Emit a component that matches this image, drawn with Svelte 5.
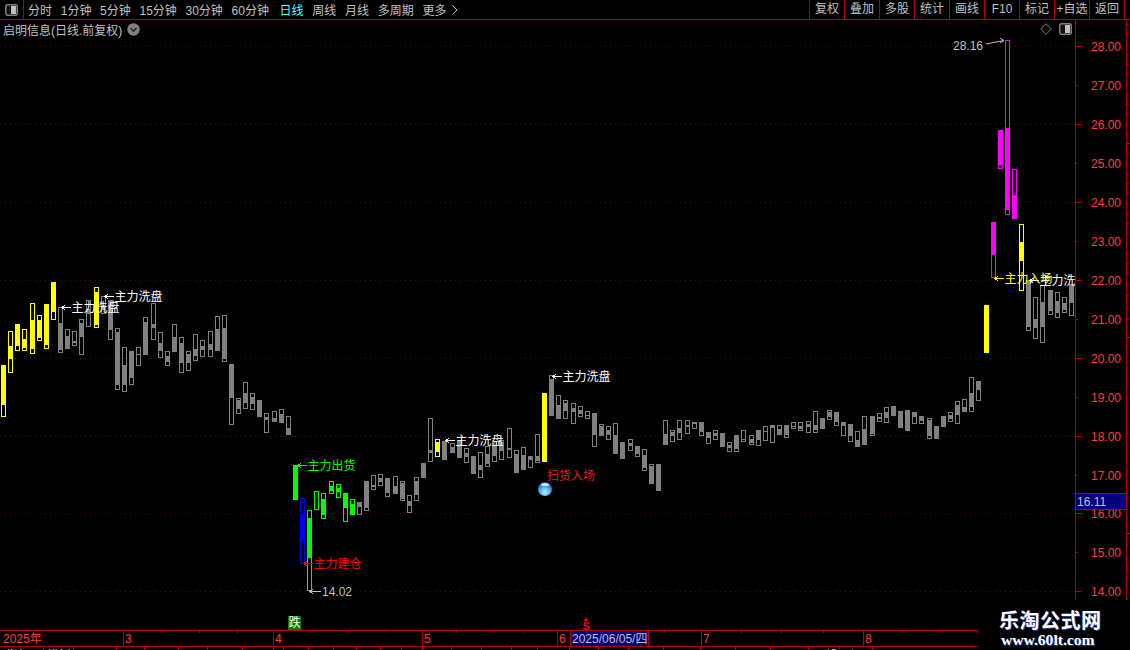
<script>
    const periods = [
        { t: '分时' }, { t: '1分钟' }, { t: '5分钟' }, { t: '15分钟' }, { t: '30分钟' }, { t: '60分钟' },
        { t: '日线', on: true }, { t: '周线' }, { t: '月线' }, { t: '多周期' }, { t: '更多' }
    ];
    const tools = ['复权', '叠加', '多股', '统计', '画线', 'F10', '标记', '+自选', '返回'];

    // [left x, high y, body top y, body bottom y, low y]  all in page pixels
    const yellowA = [
        [1,365,365,405,417],[8,331,346,359,373],[15,324,325,346,351],[22,329,339,348,351],
        [30,303,320,349,354],[37,315,320,338,341],[44,304,304,345,349],[51,282,282,312,320]
    ];
    const grayA = [
        [58,307,323,350,353],[65,329,336,349,349],[72,331,341,343,346],[79,319,323,337,355],
        [86,300,309,314,327]
    ];
    const yellowB = [[94,287,292,325,328]];
    const grayB = [
        [101,296,305,310,314],[108,300,300,330,340],[115,328,332,385,390],[122,347,365,385,392],
        [129,351,351,378,385],[136,347,354,355,366],[143,317,322,355,355],[151,303,324,328,340],
        [158,332,343,351,358],[165,351,356,362,366],[172,324,337,352,352],[179,337,343,363,373],
        [186,351,354,363,371],[193,334,349,356,361],[200,340,346,350,357],[208,331,344,350,357],
        [215,316,329,351,351],[222,315,328,359,362],[229,364,365,398,425],[236,398,400,409,414],
        [243,382,393,403,409],[250,393,397,404,410],[257,400,400,417,417],[264,413,417,420,433],
        [272,411,418,422,422],[279,409,414,423,423],[286,416,428,435,435]
    ];
    const green = [
        [293,465,465,500,500],[307,510,518,558,591],[314,491,491,491,510],[321,493,499,515,519],
        [329,481,486,491,494],[336,484,488,492,498],[343,493,494,508,522],[350,499,504,515,515]
    ];
    const blue = [[300,498,514,541,564]];
    const grayC = [
        [357,502,502,507,515],[364,481,481,508,511],[371,475,485,487,490],[378,474,478,482,486],
        [385,478,478,493,497],[393,476,486,494,494],[400,481,483,499,501],[407,495,501,506,513],
        [414,477,481,495,501],[421,463,463,478,478],[428,418,450,453,462]
    ];
    const yellowC = [[435,439,442,452,457]];
    const grayD = [
        [442,441,441,460,460],[450,443,447,453,453],[457,440,440,458,458],[464,448,453,457,463],
        [471,456,456,474,474],[478,452,465,470,478],[485,446,454,464,467],[492,441,445,456,462],
        [499,440,442,451,460],[507,428,448,450,458],[514,450,454,473,473],[521,447,455,470,470],
        [528,456,456,460,468],[535,434,456,461,463]
    ];
    const yellowD = [[542,393,393,462,462]];
    const grayE = [
        [549,375,379,416,416],[556,395,405,419,419],[563,400,403,411,419],[571,403,408,412,424],
        [578,406,410,414,417],[585,411,415,416,419],[592,413,413,435,447],[599,424,426,436,436],
        [606,426,430,435,440],[613,423,435,454,454],[620,442,442,459,459],[628,439,443,446,451],
        [635,446,446,454,457],[642,449,455,468,471],[649,464,466,484,484],[656,464,464,491,491],
        [663,420,434,445,445],[670,430,432,436,442],[677,420,428,433,440],[685,420,425,427,434],
        [692,422,422,424,429],[699,422,422,432,436],[706,432,432,438,444],[713,430,433,436,440],
        [720,433,433,447,447],[727,442,445,448,452],[734,435,435,449,452],[741,430,439,440,442],
        [749,435,439,443,445],[756,430,431,440,446],[763,426,431,432,441],[770,425,425,428,443],
        [777,425,429,435,435],[784,425,425,435,438],[791,422,426,427,429],[798,422,426,429,431],
        [806,421,424,427,433],[813,411,425,430,433],[820,418,418,429,429],[827,410,412,417,420],
        [834,412,412,422,426],[841,422,422,426,436],[848,424,424,436,442],[855,431,440,447,447],
        [862,416,429,445,445],[870,416,417,434,436],[877,413,417,419,422],[884,407,412,418,423],
        [891,406,406,416,416],[898,411,411,428,428],[905,410,410,431,431],[912,412,412,417,424],
        [919,416,416,421,424],[927,418,420,436,439],[934,426,426,439,439],[941,416,416,427,427],
        [948,412,415,419,422],[955,401,405,415,424],[962,399,407,412,412],[969,377,393,407,412],
        [976,381,381,390,401]
    ];
    const yellowE = [[984,305,305,353,353]];
    const magenta = [
        [991,222,222,255,278],[998,130,130,165,169],[1005,40,128,210,215],[1012,169,195,219,219]
    ];
    const yellowF = [[1019,224,242,261,291]];
    const grayF = [
        [1026,280,280,327,331],[1033,297,319,328,339],[1040,285,302,327,343],[1048,290,290,311,315],
        [1055,292,301,313,318],[1062,297,303,310,313],[1069,284,284,303,316]
    ];

    const YELLOW = '#ffff00';
    const GRAY = '#808080';
    const series = [
        [yellowA, YELLOW], [grayA, GRAY], [yellowB, YELLOW], [grayB, GRAY], [green, '#00ff00'], [blue, '#0000ff'],
        [grayC, GRAY], [yellowC, YELLOW], [grayD, GRAY], [yellowD, YELLOW], [grayE, GRAY], [yellowE, YELLOW],
        [magenta, '#ff00ff'], [yellowF, YELLOW], [grayF, GRAY]
    ];

    const gridY = [46, 124, 202, 280, 358, 436, 513, 591];
    const prices = [
        [28, 46], [27, 85], [26, 124], [25, 163], [24, 202], [23, 241], [22, 280], [21, 319],
        [20, 358], [19, 397], [18, 436], [17, 475], [16, 513], [15, 552], [14, 591]
    ];
    const edgeTicks = [24, 34, 44, 54, 64, 74, 84, 94, 104, 114, 124, 133, 153, 163, 173, 183, 193, 203, 213, 223, 233, 243, 253, 263, 273, 283, 295, 307, 319, 361, 397, 433, 469, 497, 569];
    const edgeMajor = [143, 337, 533];

    // signals sit on the price chart: arrow start x, y, text, colour
    const signals = [
        { x: 61, y: 307, text: '主力洗盘', color: '#ffffff' },
        { x: 104, y: 296, text: '主力洗盘', color: '#ffffff' },
        { x: 297, y: 465, text: '主力出货', color: '#00ff00' },
        { x: 303, y: 563, text: '主力建仓', color: '#ff0000' },
        { x: 445, y: 440, text: '主力洗盘', color: '#ffffff' },
        { x: 552, y: 376, text: '主力洗盘', color: '#ffffff' },
        { x: 994, y: 278, text: '主力入场', color: '#ffff00' },
        { x: 1029, y: 280, text: '主力洗盘', color: '#ffffff' }
    ];

    const months = [
        { x: 123, label: '3' }, { x: 273, label: '4' }, { x: 422, label: '5' },
        { x: 557, label: '6' }, { x: 701, label: '7' }, { x: 863, label: '8' }
    ];
    const dateTicks = [162, 199, 237, 310, 348, 385, 456, 490, 523, 664, 741, 781, 823, 902, 938, 976];
    const tabLines = [43, 73, 116, 144, 178, 207, 242, 273, 283, 308, 333, 356, 380, 401, 422, 451, 481, 511, 537, 569, 598, 628, 663, 700, 735, 770, 808, 839, 872];
</script>

{#snippet panelIcon(x, y)}
    <svg class="icon" width="13" height="12" viewBox="0 0 13 12" style="margin-left:{x}px;margin-top:{y}px">
        <rect x="0.75" y="0.75" width="11.5" height="10.5" rx="2" fill="#111" stroke="#808080" stroke-width="1.5" />
        <rect x="6" y="2" width="5" height="8" fill="#c0c0c0" />
    </svg>
{/snippet}

<div class="page">
    <div class="toolbar">
        <div class="panel-btn">{@render panelIcon(5, 0)}</div>
        <div class="periods">
            {#each periods as p}
                <span class:on={p.on}>{p.t}</span>
            {/each}
            <svg class="more" width="6" height="10" viewBox="0 0 6 10"><path d="M0.5 0.5 L5 5 L0.5 9.5" fill="none" stroke="#c0c0c0" /></svg>
        </div>
        <div class="tools">
            {#each tools as t}
                <span>{t}</span>
            {/each}
        </div>
    </div>

    <div class="body">
        <div class="plot">
            <div class="titlebar">
                <span class="stock">启明信息(日线.前复权)</span>
                <svg class="drop" width="13" height="13" viewBox="0 0 13 13">
                    <circle cx="6.5" cy="6.5" r="6.2" fill="#808080" />
                    <path d="M3.5 5 L6.5 8.2 L9.5 5" fill="none" stroke="#222" stroke-width="1.6" />
                </svg>
                <svg class="diamond" width="12" height="12" viewBox="0 0 12 12">
                    <path d="M6 0.7 L11.3 6 L6 11.3 L0.7 6 Z" fill="none" stroke="#808080" />
                </svg>
                {@render panelIcon(7, 0)}
            </div>

            <svg class="chart" width="1075" height="562" viewBox="0 38 1075 562">
                <defs>
                    <radialGradient id="ball" cx="50%" cy="72%" r="70%">
                        <stop offset="0%" stop-color="#b4f4ff" />
                        <stop offset="55%" stop-color="#4aa8f0" />
                        <stop offset="100%" stop-color="#1450b0" />
                    </radialGradient>
                </defs>

                {#each gridY as y}
                    <line class="grid" x1="0" x2="1075" y1={y + 0.5} y2={y + 0.5} />
                {/each}

                {#each series as [bars, color]}
                    {#each bars as [x, hi, top, bot, lo]}
                        <g class="bar">
                            <rect x={x + 0.5} y={hi + 0.5} width="4" height={lo - hi - 1} fill="none" stroke={color} />
                            {#if bot > top}
                                <rect x={x} y={top} width="5" height={bot - top} fill={color} />
                            {/if}
                        </g>
                    {/each}
                {/each}

                {#each signals as s}
                    <path class="arrow" d="M{s.x + 10} {s.y + 0.5} H{s.x + 1} M{s.x + 4} {s.y - 2} L{s.x + 1} {s.y + 0.5} L{s.x + 4} {s.y + 3}" stroke={s.color} />
                    <text x={s.x + 10.5} y={s.y + 5} fill={s.color}>{s.text}</text>
                {/each}

                <text x="547" y="480" fill="#f01818">扫货入场</text>
                <circle cx="545" cy="489" r="7" fill="url(#ball)" />
                <ellipse cx="545" cy="484.5" rx="4" ry="1.6" fill="#eaf8ff" opacity="0.85" />

                <path class="arrow" d="M321 591.5 H310 M313 589 L310 591.5 L313 594" stroke="#c0c0c0" />
                <text x="322" y="596" fill="#c0c0c0">14.02</text>
                <text x="953" y="50" fill="#c0c0c0">28.16</text>
                <path class="arrow thin" d="M986 44 L1004 40.5 M1000 38 L1004 40.5 L1000 43" stroke="#c0c0c0" />
            </svg>
        </div>

        <svg class="axis" width="55" height="580" viewBox="1075 20 55 580">
            <line class="rule" x1="1075.5" x2="1075.5" y1="20" y2="600" />
            <line class="rule" x1="1126.5" x2="1126.5" y1="20" y2="600" />
            {#each prices as [p, y]}
                <line class="rule" x1="1076" x2={p % 2 === 0 ? 1082 : 1078} y1={y + 0.5} y2={y + 0.5} />
                <text class="price" x="1091" y={y + 5}>{p}.00</text>
            {/each}
            {#each edgeTicks as y}
                <line class="rule" x1="1127" x2="1129" y1={y + 0.5} y2={y + 0.5} />
            {/each}
            {#each edgeMajor as y}
                <line class="rule" x1="1127" x2="1130" y1={y + 0.5} y2={y + 0.5} />
            {/each}
            <rect class="now" x="1075.5" y="493.5" width="51" height="16" />
            <text x="1077" y="506" fill="#c0c0c0">16.11</text>
        </svg>
    </div>

    <svg class="dates" width="1130" height="50" viewBox="0 600 1130 50">
        <rect x="288" y="616" width="13" height="14" fill="#008000" />
        <text x="288.5" y="627" fill="#ffffff">跌</text>
        <path d="M584 621 L586 617 L588 621 Z" fill="#ff0000" />
        <text class="sign" x="582.5" y="630" fill="#ff0000">S</text>

        <line class="rule" x1="0" x2="978" y1="630.5" y2="630.5" />
        <line class="rule" x1="0" x2="978" y1="646.5" y2="646.5" />
        <text class="price" x="3" y="643">2025年</text>
        {#each months as m}
            <line class="rule" x1={m.x + 0.5} x2={m.x + 0.5} y1="630" y2="646" />
            <text class="price" x={m.x + 2} y="643">{m.label}</text>
        {/each}
        {#each dateTicks as x}
            <line class="rule" x1={x + 0.5} x2={x + 0.5} y1="630" y2="633" />
        {/each}

        <rect class="now" x="570.5" y="630.5" width="78" height="16" />
        <text x="572" y="643" fill="#c0c0c0">2025/06/05/四</text>

        {#each tabLines as x}
            <line class="rule" x1={x + 0.5} x2={x + 0.5} y1="646" y2="650" />
        {/each}
        <text x="6" y="660" fill="#e0e0e0">指标</text>
        <text x="47" y="660" fill="#e0e0e0">模板</text>
        <text x="826" y="660" fill="#e0e0e0">设</text>
        <text x="847" y="660" fill="#54ffff">主图</text>
    </svg>

    <div class="watermark">
        <div class="wm-cn">乐淘公式网</div>
        <div class="wm-en">www.60lt.com</div>
    </div>
</div>

<style>
    :global(body) {
        background: #000;
        overflow: hidden;
    }

    .page {
        position: relative;
        width: 1130px;
        height: 650px;
        overflow: hidden;
        background: #000;
        color: #c0c0c0;
        font: 12px "Liberation Sans", "Noto Sans CJK SC", sans-serif;
    }

    .toolbar {
        display: flex;
        align-items: stretch;
        height: 20px;
        box-sizing: border-box;
        border-bottom: 1px solid #b40000;
    }

    .panel-btn {
        display: flex;
        align-items: center;
        width: 24px;
        box-sizing: border-box;
        border-right: 1px solid #b40000;
    }

    .periods {
        display: flex;
        align-items: center;
        gap: 8.7px;
        margin-left: 4px;
    }

    .periods .on {
        color: #54ffff;
        margin-left: 2px;
    }

    .more {
        margin-left: -3px;
    }

    .tools {
        display: flex;
        margin-left: auto;
        margin-right: 5px;
        border-right: 1px solid #b40000;
    }

    .tools span {
        width: 35px;
        box-sizing: border-box;
        border-left: 1px solid #b40000;
        text-align: center;
        line-height: 19px;
    }

    .body {
        display: flex;
        height: 580px;
    }

    .plot {
        display: flex;
        flex-direction: column;
        width: 1075px;
    }

    .titlebar {
        display: flex;
        align-items: center;
        height: 18px;
        padding: 0 3px;
        box-sizing: border-box;
    }

    .drop {
        margin-left: 5px;
    }

    .diamond {
        margin-left: auto;
    }

    .icon {
        display: block;
        flex: none;
    }

    .chart,
    .axis,
    .dates {
        display: block;
        flex: none;
    }

    svg text {
        font: 12px "Liberation Sans", "Noto Sans CJK SC", sans-serif;
    }

    .grid {
        stroke: #6e0000;
        stroke-dasharray: 1 4;
    }

    .bar rect,
    .rule,
    .now {
        shape-rendering: crispEdges;
    }

    .arrow {
        fill: none;
        stroke-width: 1;
        shape-rendering: crispEdges;
    }

    .arrow.thin {
        shape-rendering: auto;
    }

    .rule {
        stroke: #b40000;
    }

    .now {
        fill: #000080;
        stroke: #b40000;
    }

    svg .price {
        fill: #ff3c3c;
    }

    svg .sign {
        font: bold 11px "Liberation Sans", sans-serif;
    }

    .watermark {
        position: absolute;
        left: 999px;
        top: 608px;
        color: #fff;
        text-shadow: 1px 1px 0 #1c3c9c;
        font-weight: bold;
    }

    .wm-cn {
        font: bold 20px/24px "Noto Sans CJK SC", sans-serif;
        letter-spacing: 0.5px;
    }

    .wm-en {
        margin-left: 2px;
        font: bold 15.6px/16px "Liberation Serif", serif;
    }
</style>
